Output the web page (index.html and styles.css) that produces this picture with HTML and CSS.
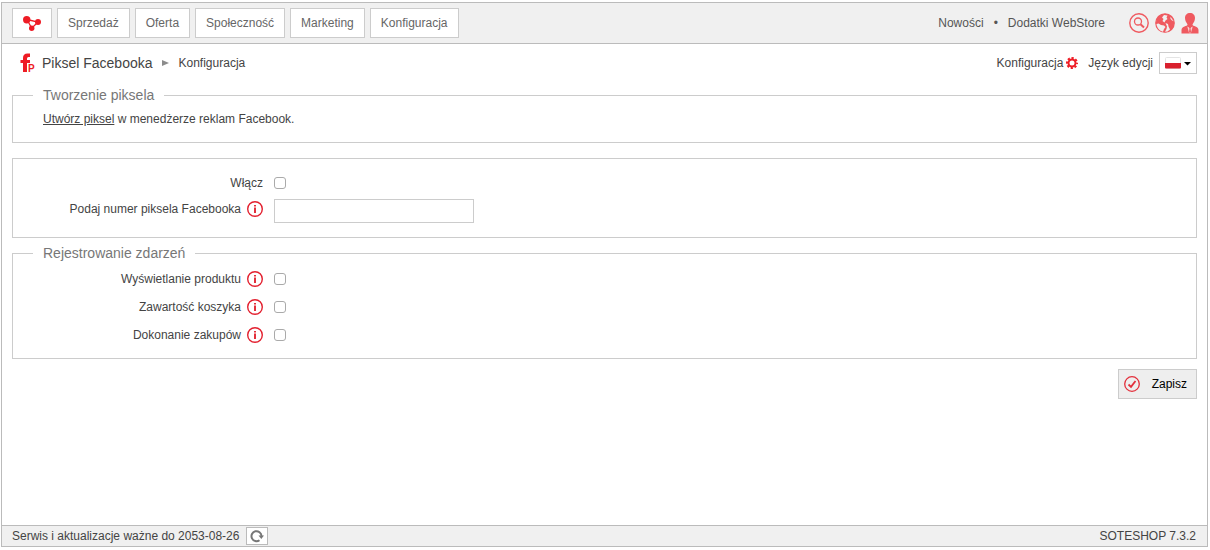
FILE: index.html
```html
<!DOCTYPE html>
<html lang="pl">
  <head>
    <title>Piksel Facebooka - Konfiguracja</title>
    <meta charset="utf-8" />
    <meta name="viewport" content="width=device-width, initial-scale=1" />
    <link rel="stylesheet" href="styles.css">
  </head>
  <body>
    <!-- shared info icon -->
    <svg class="sprite" width="0" height="0" aria-hidden="true">
      <symbol id="info" viewBox="0 0 16 16">
        <circle cx="8" cy="8" r="7.3" fill="none" stroke="#e3202f" stroke-width="1.4" />
        <path d="M8 4v1.500M8 6.500v5.500" stroke="#e3303c" stroke-width="2" />
      </symbol>
    </svg>

    <div class="page">
      <header class="topbar">
        <nav class="menu">
          <a href="#" class="menu-item menu-home" aria-label="Pulpit">
            <svg width="18" height="15" viewBox="0 0 18 15">
              <path d="M4 3.500L15 6L8.700 12.200Z" fill="none" stroke="#ee1c25" stroke-width="1.300" />
              <circle cx="3.700" cy="3.700" r="3.700" fill="#ee1c25" />
              <circle cx="15" cy="6" r="3" fill="#ee1c25" />
              <circle cx="8.700" cy="12.200" r="2.700" fill="#ee1c25" />
            </svg>
          </a>
          <a href="#" class="menu-item">Sprzedaż</a>
          <a href="#" class="menu-item">Oferta</a>
          <a href="#" class="menu-item">Społeczność</a>
          <a href="#" class="menu-item">Marketing</a>
          <a href="#" class="menu-item">Konfiguracja</a>
        </nav>
        <div class="top-links">
          <a href="#">Nowości</a>
          <span>•</span>
          <a href="#">Dodatki WebStore</a>
        </div>
        <div class="top-icons">
          <a href="#" aria-label="Szukaj">
            <svg width="20" height="20" viewBox="0 0 20 20" fill="none" stroke="#ef5a60">
              <circle cx="10" cy="10" r="9.200" stroke-width="1.400" />
              <circle cx="9" cy="8.500" r="3.500" stroke-width="1.300" />
              <path d="M11.500 11.200L15 14.500" stroke-width="2" />
            </svg>
          </a>
          <a href="#" aria-label="Sklep">
            <svg width="20" height="20" viewBox="0 0 20 20">
              <circle cx="10" cy="10" r="9.200" fill="#ef5a60" stroke="#ef5a60" stroke-width="1.300" />
              <path d="M1.500 11L3.500 10.500L6 12L9 12.500L10.500 14L9 16L8 18.700C4.500 18 2 15 1.500 11Z" fill="#f0f0f0" />
              <path d="M9 2L12.500 2.500L11.500 4.500L12.500 6L10.500 7.500L9.500 9.500L7.500 8L8.500 6L7 4.500Z" fill="#f0f0f0" />
              <path d="M10.500 10L13 11L13.500 13.500L15 16.500L12.500 18.500L10 18.800L11.500 16L12 13.500Z" fill="#f0f0f0" />
              <path d="M15.500 3.800L18.500 8L17 7.500L15.500 5.800Z" fill="#f0f0f0" />
            </svg>
          </a>
          <a href="#" aria-label="Konto">
            <svg width="18" height="21" viewBox="0 0 18 21">
              <path d="M9 0C12 0 14 2 14 5C14 8 12.500 9.500 11.500 11.500C11.500 13.500 17.500 13 17.500 17V20.500H0.500V17C0.500 13 6.500 13.500 6.500 11.500C5.500 9.500 4 8 4 5C4 2 6 0 9 0Z" fill="#ef5a60" />
              <path d="M6.300 13.500L8.200 20.500H9.800L11.700 13.500L9 15Z" fill="#f9d3d4" />
              <path d="M8 14H10L9.500 15.500L10 19L9 20.500L8 19L8.500 15.500Z" fill="#ef5a60" />
            </svg>
          </a>
        </div>
      </header>

      <main class="content">
        <div class="title-bar">
          <svg class="app-icon" width="16" height="20" viewBox="0 0 16 20" fill="#ee1c25" aria-hidden="true">
            <path d="M10 0.500V4H8.500Q7 4 7 5.500V7H10V10H7V19H3V10H0.500V7H3V5Q3 0.500 7.500 0.500Z" />
            <text class="app-letter" x="8" y="19">P</text>
          </svg>
          <h1>Piksel Facebooka</h1>
          <svg class="crumb-arrow" width="7" height="6" viewBox="0 0 7 6" aria-hidden="true">
            <path d="M0 0L7 3L0 6Z" fill="#8c8c8c" />
          </svg>
          <span class="crumb">Konfiguracja</span>

          <div class="title-tools">
            <a href="#" class="config-link">
              Konfiguracja
              <svg width="12" height="12" viewBox="0 0 12 12" aria-hidden="true">
                <circle cx="6" cy="6" r="5" fill="none" stroke="#ee1c25" stroke-width="2" stroke-dasharray="2.200 1.727" stroke-dashoffset="1.100" />
                <circle cx="6" cy="6" r="3.500" fill="none" stroke="#ee1c25" stroke-width="2" />
              </svg>
            </a>
            <label for="lang">Język edycji</label>
            <div class="lang-box">
              <svg width="28" height="14" viewBox="0 0 28 14" aria-hidden="true">
                <rect x="1.500" y="1.500" width="15" height="11" rx="1" fill="#fff" stroke="#e4e4e4" />
                <path d="M1 7H17V11.500Q17 12.500 16 12.500H2Q1 12.500 1 11.500Z" fill="#d9202e" />
                <path d="M20 6H27L23.500 9.500Z" fill="#000" />
              </svg>
              <select id="lang" class="lang-select">
                <option>Polski</option>
                <option>English</option>
              </select>
            </div>
          </div>
        </div>

        <form>
          <fieldset class="box box-create">
            <legend>Tworzenie piksela</legend>
            <p><a href="#" class="create-link">Utwórz piksel</a> w menedżerze reklam Facebook.</p>
          </fieldset>

          <fieldset class="box box-main">
            <div class="row">
              <label for="enabled">Włącz</label>
              <input type="checkbox" id="enabled" />
            </div>
            <div class="row row-text">
              <label for="pixel">Podaj numer piksela Facebooka
                <svg class="info" width="16" height="16"><use href="#info" /></svg>
              </label>
              <input type="text" id="pixel" />
            </div>
          </fieldset>

          <fieldset class="box box-events">
            <legend>Rejestrowanie zdarzeń</legend>
            <div class="row">
              <label for="view">Wyświetlanie produktu
                <svg class="info" width="16" height="16"><use href="#info" /></svg>
              </label>
              <input type="checkbox" id="view" />
            </div>
            <div class="row">
              <label for="basket">Zawartość koszyka
                <svg class="info" width="16" height="16"><use href="#info" /></svg>
              </label>
              <input type="checkbox" id="basket" />
            </div>
            <div class="row">
              <label for="purchase">Dokonanie zakupów
                <svg class="info" width="16" height="16"><use href="#info" /></svg>
              </label>
              <input type="checkbox" id="purchase" />
            </div>
          </fieldset>

          <div class="actions">
            <button type="submit" class="save">
              <svg width="16" height="16" viewBox="0 0 16 16" fill="none" stroke="#e3303c" aria-hidden="true">
                <circle cx="8" cy="8" r="7.300" stroke-width="1.300" />
                <path d="M4.500 8.500L7 10.800L11.500 5" stroke-width="1.800" />
              </svg>
              Zapisz
            </button>
          </div>
        </form>
      </main>

      <footer class="footer">
        <span>Serwis i aktualizacje ważne do 2053-08-26</span>
        <button type="button" class="refresh" aria-label="Odśwież">
          <svg width="14" height="14" viewBox="0 0 14 14" aria-hidden="true">
            <path d="M9.500 11.200A5 5 0 1 1 11.500 7" fill="none" stroke="#777" stroke-width="2" />
            <path d="M8.500 6.500H14L11.300 10Z" fill="#777" />
          </svg>
        </button>
        <span class="version">SOTESHOP 7.3.2</span>
      </footer>
    </div>
  </body>
</html>
```
FILE: styles.css
```css
* {
  box-sizing: border-box;
}

body {
  margin: 0;
  padding: 2px 2px 3px 1px;
  background: #fff;
  color: #444;
  font-family: "Liberation Sans", Arial, Helvetica, sans-serif;
  font-size: 12px;
  line-height: 16px;
}

a {
  color: inherit;
  text-decoration: none;
}

svg {
  display: block;
  flex: none;
}

.sprite {
  position: absolute;
}

.page {
  display: flex;
  flex-direction: column;
  min-height: calc(100vh - 5px);
  border: 1px solid #bbb;
}

/* top bar */
.topbar {
  display: flex;
  align-items: center;
  padding: 5px 8px 5px 10px;
  background: #f0f0f0;
  border-bottom: 1px solid #bbb;
  color: #555;
}

.menu {
  display: flex;
  gap: 5px;
}

.menu-item {
  display: flex;
  align-items: center;
  height: 30px;
  padding: 0 10px;
  background: #fff;
  border: 1px solid #ccc;
  color: #666;
}

.top-links {
  display: flex;
  gap: 10px;
  margin-left: auto;
}

.top-icons {
  display: flex;
  align-items: center;
  gap: 6px;
  margin-left: 24px;
}

/* page title */
.content {
  flex: 1;
  padding: 7px 10px;
}

.title-bar {
  display: flex;
  align-items: center;
  height: 24px;
  padding-left: 8px;
}

.title-bar h1 {
  margin: 0 9px 0 6px;
  font-size: 14px;
  line-height: 16px;
  font-weight: normal;
}

.app-letter {
  font-size: 10px;
  font-weight: bold;
}

.crumb {
  margin-left: 10px;
}

.title-tools {
  display: flex;
  align-items: center;
  gap: 6px;
  margin-left: auto;
}

.config-link {
  display: flex;
  align-items: center;
  gap: 3px;
  margin-right: 4px;
}

.lang-box {
  position: relative;
  padding: 3px 4px;
  border: 1px solid #ccc;
}

.lang-select {
  position: absolute;
  inset: 0;
  width: 100%;
  opacity: 0;
  cursor: pointer;
}

/* form */
.box {
  min-width: 0;
  margin: 0;
  padding: 0 20px;
  border: 1px solid #ccc;
}

.box legend {
  padding: 0 10px;
  color: #777;
  font-size: 14px;
}

.box-create {
  margin-top: 12px;
  padding-bottom: 15px;
}

.box-create p {
  margin: 8px 10px 0;
}

.create-link {
  text-decoration: underline;
}

.box-main {
  margin-top: 15px;
  padding-top: 10px;
  padding-bottom: 12px;
}

.box-events {
  margin-top: 7px;
  padding-top: 4px;
  padding-bottom: 9px;
}

.row {
  display: grid;
  grid-template-columns: 230px 200px;
  column-gap: 11px;
  align-items: center;
  min-height: 28px;
}

.row label {
  display: flex;
  align-items: center;
  justify-content: flex-end;
  gap: 6px;
}

.row-text label {
  padding-bottom: 4px;
}

input[type="checkbox"] {
  appearance: none;
  width: 12px;
  height: 12px;
  margin: 0;
  background: #fff;
  border: 1px solid #aaa;
  border-radius: 3px;
}

input[type="checkbox"]:checked {
  background: #e3202f;
}

input[type="text"] {
  height: 24px;
  padding: 0 5px;
  border: 1px solid #ccc;
  font: inherit;
}

.actions {
  display: flex;
  justify-content: flex-end;
  margin-top: 10px;
}

.save {
  display: flex;
  align-items: center;
  gap: 12px;
  height: 30px;
  padding: 0 9px 0 5px;
  background: #eee;
  border: 1px solid #ccc;
  color: #000;
  font: inherit;
  cursor: pointer;
}

/* footer */
.footer {
  display: flex;
  align-items: center;
  padding: 1px 11px 1px 10px;
  background: #f0f0f0;
  border-top: 1px solid #bbb;
}

.refresh {
  margin-left: 7px;
  padding: 1px 3px;
  background: #fff;
  border: 1px solid #bbb;
  cursor: pointer;
}

.version {
  margin-left: auto;
}
```
